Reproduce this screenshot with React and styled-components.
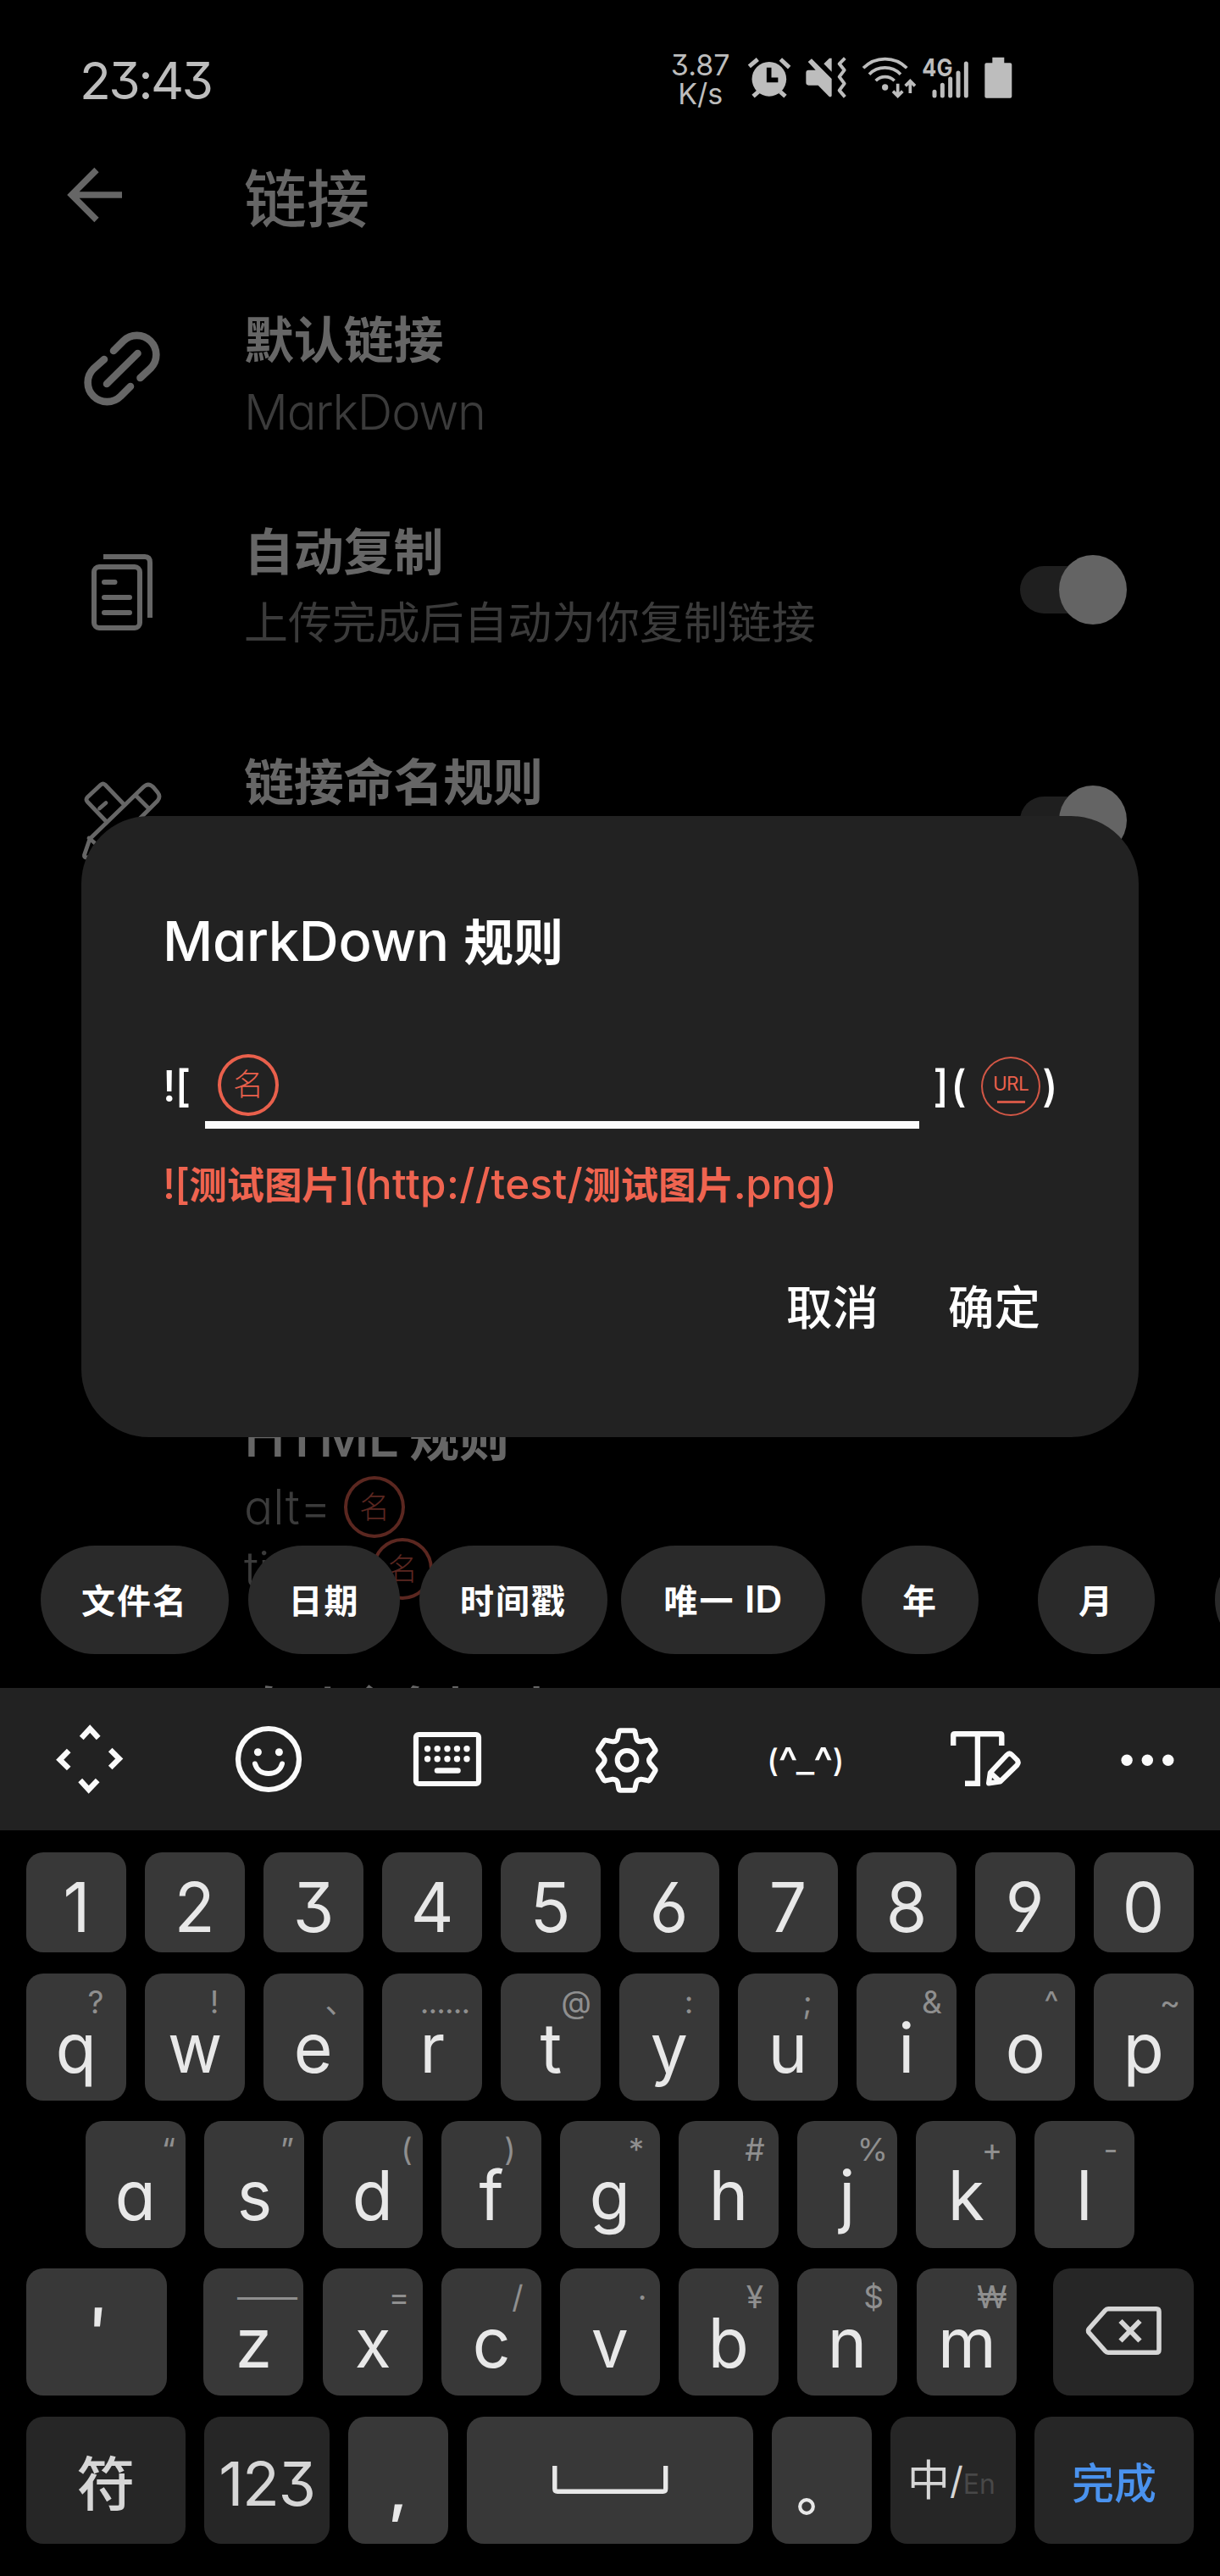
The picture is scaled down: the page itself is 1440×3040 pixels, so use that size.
import React from "react";
import styled, { createGlobalStyle } from "styled-components";

const GlobalStyle = createGlobalStyle`
  html, body { margin: 0; padding: 0; background: #000; }
  * { box-sizing: border-box; }
  body {
    font-family: Inter, "Noto Sans CJK SC", sans-serif;
    font-feature-settings: "cv11", "cv09", "cv03", "cv04";
    -webkit-font-smoothing: antialiased;
  }
`;

const Screen = styled.div`
  width: 1440px;
  height: 3040px;
  display: flex;
  flex-direction: column;
  background: #000;
  overflow: hidden;
`;

const AppArea = styled.div`
  position: relative;
  flex: 0 0 1992px;
  overflow: hidden;
`;

/* Latin letters sit a little larger than the CJK text beside them */
const Latin = styled.span`
  font-size: ${(p) => p.$size || 1.11}em;
  letter-spacing: ${(p) => p.$ls || 0}px;
`;

/* ---------- status bar ---------- */
const StatusBar = styled.div`
  height: 182px;
  padding: 0 245px 0 94px;
  display: flex;
  align-items: center;
  justify-content: space-between;
  color: #bdbdbd;
`;

const Clock = styled.div`
  font-size: 60.5px;
  line-height: 70px;
  letter-spacing: -2.6px;
  margin-top: 7px;
`;

const StatusIcons = styled.div`
  display: flex;
  align-items: center;
`;

const Speed = styled.div`
  width: 70px;
  margin-top: 5px;
  margin-right: 20px;
  font-size: 34px;
  line-height: 33.5px;
  text-align: center;
  white-space: pre-line;
`;

const Icon = styled.svg`
  display: block;
  flex: none;
  width: ${(p) => p.$w}px;
  height: ${(p) => p.$h}px;
  margin-left: ${(p) => p.$ml || 0}px;
  margin-top: ${(p) => p.$mt || 0}px;
  overflow: visible;
`;

/* ---------- settings page ---------- */
const TopBar = styled.div`
  height: 105px;
  display: flex;
  align-items: center;
  color: #666;
`;

const PageTitle = styled.h1`
  margin: 0 0 0 136px;
  font-size: 74px;
  line-height: 106px;
  font-weight: 500;
`;

const Item = styled.section`
  height: ${(p) => p.$h}px;
  margin-top: ${(p) => p.$mt || 0}px;
  padding: 0 110px 0 94px;
  display: flex;
  align-items: center;
  color: #666;
`;

const IconSlot = styled.div`
  flex: 0 0 194px;
`;

const ItemText = styled.div`
  flex: 1;
  margin-top: 3px;
`;

const ItemTitle = styled.h2`
  margin: 0;
  font-size: 59px;
  line-height: 84px;
  font-weight: 700;
  letter-spacing: -0.2px;
  ${Latin} { font-weight: 500; }
`;

const ItemSub = styled.div`
  font-size: 51.9px;
  line-height: 84px;
  font-weight: 400;
  color: #3b3b3b;
  ${Latin} { font-weight: 300; }
`;

const Switch = styled.div`
  width: 126px;
  height: 82px;
  margin-top: 7px;
  display: flex;
  align-items: center;

  &::before {
    content: "";
    width: 100px;
    height: 56px;
    margin-right: -54px;
    border-radius: 28px;
    background: #1f1f1f;
  }
`;

const Thumb = styled.span`
  position: relative;
  width: 80px;
  height: 82px;
  border-radius: 50%;
  background: #646464;
`;

const RuleBlock = styled.section`
  margin-top: 535px;
  padding-left: 288px;
  color: #666;
`;

const RuleLine = styled.div`
  height: 73px;
  margin-top: ${(p) => p.$mt || 0}px;
  display: flex;
  align-items: center;
  font-size: 57px;
  font-weight: 300;
  color: #3b3b3b;
`;

const NextTitle = styled(ItemTitle)`
  margin-top: 89px;
`;

const Tag = styled.span`
  width: 72px;
  height: 73px;
  flex: none;
  margin-left: ${(p) => p.$ml || 0}px;
  display: flex;
  align-items: center;
  justify-content: center;
  border: 4px solid ${(p) => (p.$dim ? "#5b2720" : "#e9604c")};
  border-radius: 50%;
  color: ${(p) => (p.$dim ? "#5b2720" : "#e9604c")};
  font-size: 36px;
  line-height: 36px;
  font-weight: 300;
`;

/* ---------- dialog ---------- */
const Dialog = styled.div`
  position: absolute;
  top: 963px;
  left: 96px;
  right: 96px;
  height: 733px;
  padding: 105px 96px 0 96px;
  border-radius: 80px;
  background: #222;
  color: #fff;
`;

const DialogTitle = styled.h2`
  margin: 0;
  font-size: 58.6px;
  line-height: 85px;
  font-weight: 600;
  word-spacing: 3px;
  ${Latin} { font-weight: 500; }
`;

const RuleRow = styled.div`
  height: 91px;
  margin-top: 86px;
  display: flex;
  font-size: 51px;
  font-weight: 500;
`;

const Fixed = styled.span`
  width: ${(p) => p.$w}px;
  padding-left: ${(p) => p.$pl || 0}px;
  line-height: 82px;
  white-space: nowrap;
  letter-spacing: ${(p) => p.$ls || 0}px;
`;

const Field = styled.div`
  width: 844px;
  padding: 0 0 4px 14px;
  display: flex;
  align-items: center;
  border-bottom: 9px solid #fafafa;
`;

const UrlTag = styled.span`
  width: 70px;
  height: 70px;
  margin-top: 6px;
  display: flex;
  flex-direction: column;
  align-items: center;
  padding-top: 21px;
  border: 2px solid #d25746;
  border-radius: 50%;
  color: #e9604c;
  font-size: 22.5px;
  line-height: 18px;
  font-weight: 400;
  letter-spacing: -0.6px;

  &::after {
    content: "";
    width: 33px;
    height: 3px;
    margin-top: 11px;
    background: #d25746;
  }
`;

const Preview = styled.div`
  margin-top: 35px;
  font-size: 44.4px;
  line-height: 60px;
  font-weight: 700;
  color: #ef6450;
  white-space: nowrap;
  ${Latin} { font-weight: 500; }
`;

const Actions = styled.div`
  margin-top: 79px;
  padding-right: 20px;
  display: flex;
  justify-content: flex-end;
  gap: 82px;
`;

const Action = styled.button`
  padding: 0;
  border: 0;
  background: none;
  color: #fff;
  font: inherit;
  font-size: 54.5px;
  line-height: 70px;
  font-weight: 500;
`;

/* ---------- placeholder chips ---------- */
const Chips = styled.div`
  position: absolute;
  top: 1824px;
  left: 48px;
  display: flex;
`;

const Chip = styled.div`
  flex: 0 0 ${(p) => p.$w}px;
  height: 128px;
  margin-left: ${(p) => p.$ml}px;
  padding-bottom: 3px;
  display: flex;
  align-items: center;
  justify-content: center;
  border-radius: 64px;
  background: #2a2a2a;
  color: #fff;
  font-size: 40px;
  font-weight: 700;
  letter-spacing: 2px;
  white-space: pre;
  ${Latin} { font-weight: 600; }
`;

/* ---------- keyboard ---------- */
const Keyboard = styled.div`
  flex: 1;
  background: #000;
`;

const Toolbar = styled.div`
  height: 168px;
  display: flex;
  align-items: center;
  background: #222;
  color: #fafafa;
`;

const Tool = styled.div`
  flex: ${(p) => (p.$last ? "1" : "0 0 211.3px")};
  display: flex;
  align-items: center;
  justify-content: center;
`;

const Kaomoji = styled.span`
  display: flex;
  align-items: baseline;
  font-size: 37px;
  line-height: 40px;
  font-weight: 500;
  white-space: nowrap;
`;

const Eye = styled.span`
  margin: 0 -0.5px;
  font-size: 49px;
  line-height: 40px;
  transform: translateY(6px);
`;

const Mouth = styled.span`
  transform: scaleX(1.25);
  margin: 0 1px;
`;

const Keys = styled.div`
  padding: 26px 0 0 31px;
  display: flex;
  flex-direction: column;
`;

const KeyRow = styled.div`
  display: flex;
  height: ${(p) => p.$h || 150}px;
  margin-top: ${(p) => p.$mt || 0}px;
  padding-left: ${(p) => p.$indent || 0}px;
`;

const Key = styled.div`
  position: relative;
  flex: 0 0 ${(p) => p.$w || 118}px;
  margin-left: ${(p) => p.$ml ?? 22}px;
  padding-top: ${(p) => p.$pt || 0}px;
  padding-right: ${(p) => p.$pr || 0}px;
  display: flex;
  align-items: center;
  justify-content: center;
  border-radius: 20px;
  background: ${(p) => (p.$dark ? "#262626" : "#383838")};
  color: ${(p) => (p.$dark ? "#d6d6d6" : "#e8e8e8")};
  &:first-child { margin-left: 0; }
`;

const Glyph = styled.span`
  font-size: 81px;
  line-height: 100px;
  transform: scaleX(0.97);
`;

const Alt = styled.span`
  position: absolute;
  top: 14px;
  left: ${(p) => p.$x}px;
  transform: translateX(-50%);
  font-size: 37px;
  line-height: 40px;
  letter-spacing: ${(p) => p.$ls || 0}px;
  color: #8f8f8f;
  white-space: nowrap;
`;

const Word = styled.span`
  font-size: ${(p) => p.$size}px;
  line-height: 90px;
  font-weight: ${(p) => p.$weight || 400};
  letter-spacing: ${(p) => p.$ls || 0}px;
  color: ${(p) => p.$color || "inherit"};
  transform: ${(p) => p.$tf || "none"};
`;

const row2 = [
  ["q", "?", 82], ["w", "!", 82], ["e", "、", 91], ["r", "......", 74, -0.9], ["t", "@", 89],
  ["y", ":", 82], ["u", ";", 82], ["i", "&", 89], ["o", "^", 90], ["p", "~", 90],
];
const row3 = [
  ["a", "“", 98], ["s", "”", 98], ["d", "(", 99], ["f", ")", 81], ["g", "*", 90],
  ["h", "#", 90], ["j", "%", 89], ["k", "+", 90], ["l", "-", 90],
];
const row4 = [
  ["z", "——", 74, -3], ["x", "=", 90], ["c", "/", 90], ["v", "·", 97], ["b", "¥", 90],
  ["n", "$", 90], ["m", "₩", 89],
];
const row4Gap = { z: 43, x: 23, m: 23 };

const LetterKey = ({ data: [letter, alt, x, ls], ml }) => (
  <Key $pt={25} $ml={ml}>
    <Alt $x={x} $ls={ls}>{alt}</Alt>
    <Glyph>{letter}</Glyph>
  </Key>
);

const stroke = (w, extra = {}) => ({
  fill: "none",
  stroke: "currentColor",
  strokeWidth: w,
  ...extra,
});
const round = { strokeLinecap: "round", strokeLinejoin: "round" };

const AlarmIcon = () => (
  <Icon $w={51.7} $h={55} viewBox="425 70 155 165">
    <circle cx="502.500" cy="158" r="61" fill="currentColor" />
    <path d="M432 113L462 88M543 88L574 117M464 203L446 219M542 203L560 219" {...stroke(15)} />
    <path d="M502 117V161H534" stroke="#000" strokeWidth="17" fill="none" />
  </Icon>
);

const MuteIcon = () => (
  <Icon $w={50} $h={55} $ml={16.7} viewBox="630 70 150 165">
    <path
      d="M654 86L725 157V218Q722 223 716 220L677 180H643Q634 180 634 170V135Q634 126 643 126H668L641 97ZM725 84V132L697 104L717 84Z"
      fill="currentColor"
    />
    <path d="M772 84L752 104L770 126L752 150L770 174L752 198L772 221" {...stroke(12, { strokeLinejoin: "round" })} />
  </Icon>
);

const WifiIcon = () => (
  <Icon $w={65} $h={55} $ml={16.7} viewBox="830 70 195 165">
    <path d="M836 119A108 108 0 0 1 990 119M857 141A78 78 0 0 1 968 141M880 164A46 46 0 0 1 946 164" {...stroke(11)} />
    <circle cx="913" cy="187" r="11" fill="currentColor" />
    <path d="M958 174V214M941 201L958 218L975 201M1002 208V168M985 182L1002 165L1019 182" {...stroke(11)} />
  </Icon>
);

const SignalText = styled.text`
  font-family: Inter, sans-serif;
  font-size: 86px;
  font-weight: 700;
  fill: currentColor;
`;

const SignalIcon = () => (
  <Icon $w={56.7} $h={55} $ml={6.6} viewBox="1045 70 170 165">
    <SignalText x="1046" y="149" textLength="108" lengthAdjust="spacingAndGlyphs">4G</SignalText>
    <path d="M1090 203V217M1118 179V217M1146 157V217M1174 136V217M1202 103V217" {...stroke(15, round)} />
  </Icon>
);

const BatteryIcon = () => (
  <Icon $w={33.3} $h={55} $ml={16.7} viewBox="1265 70 100 165">
    <path
      d="M1293 81H1335V101H1356Q1362 101 1362 107V219Q1362 225 1356 225H1272Q1266 225 1266 219V107Q1266 101 1272 101H1293Z"
      fill="currentColor"
    />
  </Icon>
);

const BackIcon = () => (
  <Icon $w={80} $h={80} $ml={72} $mt={-9} viewBox="72 190 80 80">
    <path d="M144 230H86M114 200.500L84.500 230L114 259.500" {...stroke(7.5)} />
  </Icon>
);

const LinkIcon = () => (
  <Icon $w={100} $h={100} $mt={-17} viewBox="94 385 100 100">
    <path
      d="M134 414L145.500 402.500A22.600 22.600 0 0 1 177.700 434.700L165.500 446M154 456L142.500 467.500A22.600 22.600 0 0 1 110.300 435.300L123 424M126 453L162.500 417"
      {...stroke(8.6, round)}
    />
  </Icon>
);

const CopyIcon = () => (
  <Icon $w={100} $h={100} $mt={13} viewBox="94 649 100 100">
    <rect x="111" y="669" width="54" height="72" rx="6" {...stroke(6)} />
    <path d="M122 657H171Q177 657 177 664V729" {...stroke(6)} />
    <path d="M123 687H135.500M123 705H153M123 723H153" {...stroke(6, round)} />
  </Icon>
);

const RulerPenIcon = () => (
  <Icon $w={100} $h={100} $mt={13} viewBox="94 921 100 100">
    <path
      d="M125 969L103 946Q101 943.500 103 941L119 926Q121.500 924 124 926L146 949M106 990L169 929Q175 923 181 929L186 935Q190 940 186 945L124 1007L102 1012Q99 1012 99.500 1009ZM160 938.500L174.500 953M117.500 954L125 947.500M105 989L112 995"
      {...stroke(4.8, round)}
    />
  </Icon>
);

const toolBox = (cx) => `${cx - 50} 2026 100 100`;

const App = () => (
  <>
    <GlobalStyle />
    <Screen>
      <AppArea>
        <StatusBar>
          <Clock>23:43</Clock>
          <StatusIcons>
            <Speed>{"3.87\nK/s"}</Speed>
            <AlarmIcon />
            <MuteIcon />
            <WifiIcon />
            <SignalIcon />
            <BatteryIcon />
          </StatusIcons>
        </StatusBar>

        <TopBar>
          <BackIcon />
          <PageTitle>链接</PageTitle>
        </TopBar>

        <Item $h={263} $mt={25}>
          <IconSlot><LinkIcon /></IconSlot>
          <ItemText>
            <ItemTitle>默认链接</ItemTitle>
            <ItemSub><Latin $ls={-1.1}>MarkDown</Latin></ItemSub>
          </ItemText>
        </Item>

        <Item $h={235}>
          <IconSlot><CopyIcon /></IconSlot>
          <ItemText>
            <ItemTitle>自动复制</ItemTitle>
            <ItemSub>上传完成后自动为你复制链接</ItemSub>
          </ItemText>
          <Switch><Thumb /></Switch>
        </Item>

        <Item $h={309}>
          <IconSlot><RulerPenIcon /></IconSlot>
          <ItemText>
            <ItemTitle>链接命名规则</ItemTitle>
            <ItemSub>&nbsp;</ItemSub>
          </ItemText>
          <Switch><Thumb /></Switch>
        </Item>

        <RuleBlock>
          <ItemTitle><Latin $ls={-1.7}>HTML</Latin> 规则</ItemTitle>
          <RuleLine $mt={2}>alt=<Tag $dim $ml={15}>名</Tag></RuleLine>
          <RuleLine>title=<Tag $dim $ml={20}>名</Tag></RuleLine>
          <NextTitle>自动命名规则</NextTitle>
        </RuleBlock>

        <Dialog>
          <DialogTitle><Latin $ls={-0.3}>MarkDown</Latin> 规则</DialogTitle>
          <RuleRow>
            <Fixed $w={50} $ls={-1}>![</Fixed>
            <Field><Tag $ml={1}>名</Tag></Field>
            <Fixed $w={73} $pl={16} $ls={2}>](</Fixed>
            <UrlTag>URL</UrlTag>
            <Fixed $w={20} $pl={2}>)</Fixed>
          </RuleRow>
          <Preview>
            <Latin $ls={-1}>![</Latin>测试图片<Latin $ls={-2}>](</Latin>
            <Latin $ls={0.4}>http://test/</Latin>测试图片<Latin $ls={-0.4}>.png)</Latin>
          </Preview>
          <Actions>
            <Action>取消</Action>
            <Action>确定</Action>
          </Actions>
        </Dialog>

        <Chips>
          <Chip $w={222} $ml={0}>文件名</Chip>
          <Chip $w={179} $ml={23}>日期</Chip>
          <Chip $w={222} $ml={23}>时间戳</Chip>
          <Chip $w={241} $ml={16}>唯一 <Latin>ID</Latin></Chip>
          <Chip $w={138} $ml={43}>年</Chip>
          <Chip $w={138} $ml={70}>月</Chip>
          <Chip $w={138} $ml={71} />
        </Chips>
      </AppArea>

      <Keyboard>
        <Toolbar>
          <Tool>
            <Icon $w={100} $h={100} viewBox={toolBox(106.3)}>
              <path
                d="M96.500 2051L106.500 2040L116.500 2051M81.500 2066L71 2076.700L81.500 2087M130.500 2065L141 2075.500L130.500 2086M95 2101L105 2112L115.500 2101"
                {...stroke(6.5)}
              />
            </Icon>
          </Tool>
          <Tool>
            <Icon $w={100} $h={100} viewBox={toolBox(317)}>
              <circle cx="317" cy="2076" r="36" {...stroke(6.2)} />
              <circle cx="304.400" cy="2067.700" r="4.500" fill="currentColor" />
              <circle cx="329.400" cy="2067.700" r="4.500" fill="currentColor" />
              <path d="M301 2081.500C303 2089 309 2093 317 2093S331 2089 333 2081.500" {...stroke(6, round)} />
            </Icon>
          </Tool>
          <Tool>
            <Icon $w={100} $h={100} viewBox={toolBox(528)}>
              <rect x="491" y="2047" width="74" height="58" rx="3" {...stroke(6.2)} />
              {[504.6, 516.2, 528, 539.5, 551].map((x) => (
                <g key={x} fill="currentColor">
                  <circle cx={x} cy="2063.700" r="3.700" />
                  <circle cx={x} cy="2075.700" r="3.700" />
                </g>
              ))}
              <path d="M516 2089.500H540.500" {...stroke(6.5, round)} />
            </Icon>
          </Tool>
          <Tool>
            <Icon $w={100} $h={100} viewBox="0 -12 300 300">
              <path
                d="M127 37H173Q178 37 179 43L183 64Q186 77 200 76L226 71Q229 70 231 74L250 104Q252 108 249 111L232 131Q224 142 232 153L249 173Q252 176 250 180L231 212Q229 215 225 214L200 209Q186 209 183 221L178 244Q177 248 173 248H127Q122 248 121 244L117 221Q114 209 100 209L74 214Q70 215 68 212L49 180Q47 176 50 173L67 153Q75 142 67 131L50 111Q47 108 49 104L69 74Q71 70 75 71L100 76Q114 77 117 64L121 43Q122 37 127 37Z"
                {...stroke(18, round)}
              />
              <circle cx="150" cy="142" r="34" {...stroke(18)} />
            </Icon>
          </Tool>
          <Tool>
            <Kaomoji>(<Eye>^</Eye><Mouth>_</Mouth><Eye>^</Eye>)</Kaomoji>
          </Tool>
          <Tool>
            <Icon $w={100} $h={100} viewBox={toolBox(1162)}>
              <path d="M1125.200 2060V2048Q1125.200 2046.200 1127 2046.200H1180.500Q1182.300 2046.200 1182.300 2048V2060M1153.900 2046V2104.700H1139" {...stroke(6.4)} />
              <path
                d="M1167 2104.500L1168.800 2092L1188.500 2071Q1191.500 2068 1194.500 2071L1200.500 2077Q1203 2080 1200.500 2083L1180.500 2102.500ZM1169.500 2092.500L1180 2102"
                {...stroke(6, round)}
              />
            </Icon>
          </Tool>
          <Tool $last>
            <Icon $w={100} $h={100} viewBox={toolBox(1353.7)}>
              {[1329.8, 1354, 1378.5].map((x) => (
                <circle key={x} cx={x} cy="2077.300" r="6.700" fill="currentColor" />
              ))}
            </Icon>
          </Tool>
        </Toolbar>

        <Keys>
          <KeyRow $h={118}>
            {"1234567890".split("").map((d) => (
              <Key key={d} $pt={11}><Glyph>{d}</Glyph></Key>
            ))}
          </KeyRow>
          <KeyRow $mt={25}>
            {row2.map((k) => <LetterKey key={k[0]} data={k} />)}
          </KeyRow>
          <KeyRow $mt={24} $indent={70}>
            {row3.map((k) => <LetterKey key={k[0]} data={k} />)}
          </KeyRow>
          <KeyRow $mt={24}>
            <Key $w={166}><Word $size={78} $weight={500} $tf="translateY(0px) skewX(-4deg)">'</Word></Key>
            {row4.map((k) => <LetterKey key={k[0]} data={k} ml={row4Gap[k[0]]} />)}
            <Key $w={166} $ml={43} $dark>
              <Icon $w={100} $h={100} viewBox="1276 2702 100 100">
                <path
                  d="M1308 2724.800H1365Q1368 2724.800 1368 2728V2773Q1368 2776.200 1365 2776.200H1308Q1306 2776.200 1304.500 2774.500L1285.500 2753Q1283.500 2750.500 1285.500 2748L1304.500 2726.500Q1306 2724.800 1308 2724.800Z"
                  {...stroke(5.6, round)}
                />
                <path d="M1322.500 2739L1345.500 2762.500M1345.500 2739L1322.500 2762.500" {...stroke(6)} />
              </Icon>
            </Key>
          </KeyRow>
          <KeyRow $mt={25}>
            <Key $w={188} $dark $pt={9}><Word $size={69} $weight={500}>符</Word></Key>
            <Key $w={148} $dark $pt={8}><Word $size={72} $ls={-1.5}>123</Word></Key>
            <Key><Word $size={70} $weight={600} $tf="translateY(11px)">,</Word></Key>
            <Key $w={338}>
              <Icon $w={140} $h={36} viewBox="650 2907 140 36">
                <path d="M654.800 2908V2935Q654.800 2938.200 658 2938.200H782.500Q785.700 2938.200 785.700 2935V2908" {...stroke(5.4)} />
              </Icon>
            </Key>
            <Key>
              <Icon $w={24} $h={24} $ml={-37} $mt={62} viewBox="0 0 24 24">
                <circle cx="12" cy="12" r="7.800" {...stroke(4.2)} />
              </Icon>
            </Key>
            <Key $w={148} $dark $pr={4}>
              <Word $size={50}>中</Word>
              <Word $size={44}>/</Word>
              <Word $size={32} $color="#484848" $tf="translateY(5px)">En</Word>
            </Key>
            <Key $w={188} $dark $pt={8}><Word $size={50} $weight={500} $color="#4a92ee">完成</Word></Key>
          </KeyRow>
        </Keys>
      </Keyboard>
    </Screen>
  </>
);

export default App;
